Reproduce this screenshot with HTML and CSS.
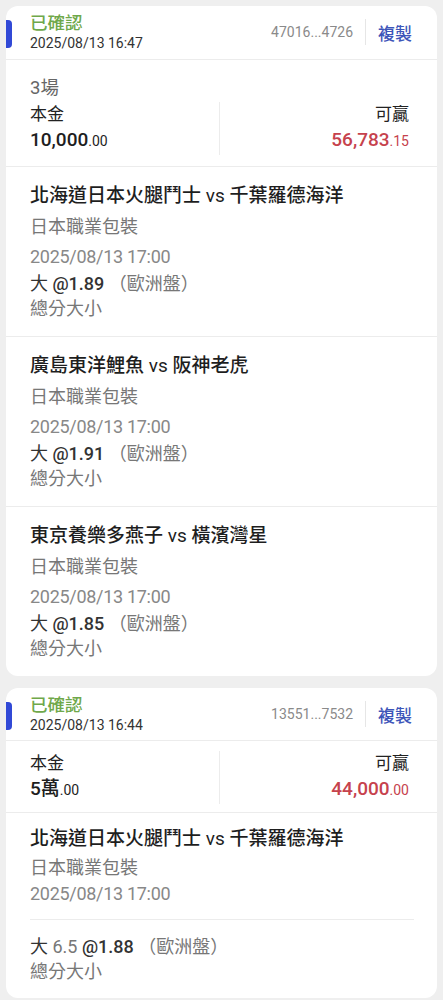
FILE: index.html
```html
<!DOCTYPE html>
<html lang="zh-Hant">
<head>
<meta charset="utf-8">
<link rel="stylesheet" href="styles.css">
</head>
<body>
<div class="page">
  <div class="card">
    <span class="marker"></span>
    <div class="head">
      <div class="head-left">
        <div class="status">已確認</div>
        <div class="time">2025/08/13 16:47</div>
      </div>
      <div class="head-right">
        <span class="bet-id">47016...4726</span>
        <span class="vline"></span>
        <span class="copy">複製</span>
      </div>
    </div>
    <div class="summary">
      <div class="count">3場</div>
      <div class="amounts">
        <div class="col">
          <div class="label">本金</div>
          <div class="money">10,000<small>.00</small></div>
        </div>
        <div class="col col-right">
          <div class="label">可贏</div>
          <div class="money win">56,783<small>.15</small></div>
        </div>
      </div>
    </div>
    <div class="match">
      <div class="title">北海道日本火腿鬥士 <span class="vs">vs</span> 千葉羅德海洋</div>
      <div class="league">日本職業包裝</div>
      <div class="kick">2025/08/13 17:00</div>
      <div class="odds">大 <b>@1.89</b> <span class="mkt">（歐洲盤）</span></div>
      <div class="type">總分大小</div>
    </div>
    <div class="match">
      <div class="title">廣島東洋鯉魚 <span class="vs">vs</span> 阪神老虎</div>
      <div class="league">日本職業包裝</div>
      <div class="kick">2025/08/13 17:00</div>
      <div class="odds">大 <b>@1.91</b> <span class="mkt">（歐洲盤）</span></div>
      <div class="type">總分大小</div>
    </div>
    <div class="match last">
      <div class="title">東京養樂多燕子 <span class="vs">vs</span> 橫濱灣星</div>
      <div class="league">日本職業包裝</div>
      <div class="kick">2025/08/13 17:00</div>
      <div class="odds">大 <b>@1.85</b> <span class="mkt">（歐洲盤）</span></div>
      <div class="type">總分大小</div>
    </div>
  </div>

  <div class="card">
    <span class="marker"></span>
    <div class="head compact">
      <div class="head-left">
        <div class="status">已確認</div>
        <div class="time">2025/08/13 16:44</div>
      </div>
      <div class="head-right">
        <span class="bet-id">13551...7532</span>
        <span class="vline"></span>
        <span class="copy">複製</span>
      </div>
    </div>
    <div class="summary single">
      <div class="amounts">
        <div class="col">
          <div class="label">本金</div>
          <div class="money">5萬<small>.00</small></div>
        </div>
        <div class="col col-right">
          <div class="label">可贏</div>
          <div class="money win">44,000<small>.00</small></div>
        </div>
      </div>
    </div>
    <div class="match single last">
      <div class="title">北海道日本火腿鬥士 <span class="vs">vs</span> 千葉羅德海洋</div>
      <div class="league">日本職業包裝</div>
      <div class="kick">2025/08/13 17:00</div>
      <div class="sep"></div>
      <div class="odds">大 <span class="line">6.5</span> <b>@1.88</b> <span class="mkt">（歐洲盤）</span></div>
      <div class="type">總分大小</div>
    </div>
  </div>
</div>
</body>
</html>
```

FILE: styles.css
```css
* { box-sizing: border-box; }
html, body {
  margin: 0;
  padding: 0;
  background: #efefef;
}
body {
  font-family: Roboto, "Noto Sans CJK TC", sans-serif;
  color: #222;
}
.page {
  padding: 6px 6px 0;
  display: flex;
  flex-direction: column;
  gap: 12px;
}
.card {
  position: relative;
  background: #fff;
  border-radius: 12px;
  overflow: hidden;
}
.marker {
  position: absolute;
  left: 0;
  top: 14px;
  width: 6px;
  height: 28px;
  background: #3149d6;
  border-radius: 0 4px 4px 0;
}
.head {
  display: flex;
  justify-content: space-between;
  align-items: center;
  padding: 6px 25px 7px 24px;
  border-bottom: 1px solid #ececec;
}
.head.compact {
  padding-bottom: 6px;
}
.status {
  font-size: 17.5px;
  line-height: 22px;
  color: #6fa84a;
  font-weight: 500;
}
.time {
  font-size: 14px;
  line-height: 18px;
  color: #333;
}
.head-right {
  display: flex;
  align-items: center;
}
.bet-id {
  font-size: 14px;
  color: #8a8a8a;
}
.vline {
  width: 1px;
  height: 26px;
  background: #e6e6e6;
  margin: 0 12px;
}
.copy {
  font-size: 17px;
  color: #3d55b9;
  font-weight: 500;
}
.summary {
  padding: 14px 28px 11px 24px;
  border-bottom: 1px solid #ececec;
}
.summary.single {
  padding-top: 10px;
  padding-bottom: 8px;
}
.count {
  font-size: 18.5px;
  line-height: 28px;
  color: #666;
}
.amounts {
  display: flex;
}
.col {
  flex: 1;
}
.col-right {
  text-align: right;
  border-left: 1px solid #ececec;
}
.label {
  font-size: 17px;
  line-height: 24px;
  color: #222;
}
.money {
  font-size: 19px;
  line-height: 28px;
  font-weight: 500;
  color: #1e1e1e;
}
.money small {
  font-size: 14px;
  font-weight: 400;
}
.money.win {
  color: #c6424d;
}
.match {
  padding: 15px 24px 15px;
  border-bottom: 1px solid #ececec;
}
.match.last {
  border-bottom: none;
}
.match.single {
  padding: 12px 23px 14px 24px;
}
.title {
  font-size: 19px;
  line-height: 28px;
  font-weight: 500;
  color: #1e1e1e;
}
.vs {
  font-weight: 400;
}
.league {
  margin-top: 3px;
  font-size: 18px;
  line-height: 28px;
  color: #777;
}
.single .league {
  margin-top: 1px;
}
.kick {
  margin-top: 2px;
  font-size: 18px;
  line-height: 28px;
  color: #888;
  letter-spacing: -0.3px;
}
.single .kick {
  margin-top: 0;
  line-height: 24px;
}
.sep {
  height: 1px;
  background: #ececec;
  margin: 13px 0 0;
}
.odds {
  font-size: 18px;
  line-height: 26px;
  color: #333;
}
.single .odds {
  margin-top: 14px;
}
.odds b {
  font-weight: 500;
}
.odds .line {
  color: #777;
}
.mkt {
  color: #777;
}
.type {
  font-size: 18px;
  line-height: 24px;
  color: #777;
}
```
